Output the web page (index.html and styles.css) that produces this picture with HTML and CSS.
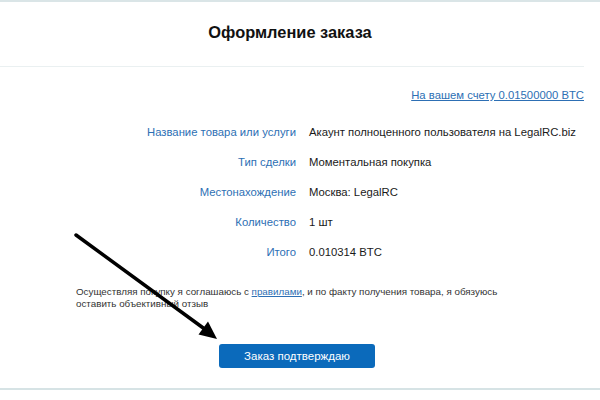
FILE: index.html
```html
<!DOCTYPE html>
<html lang="ru">
<head>
<meta charset="utf-8">
<title>Оформление заказа</title>
<link rel="stylesheet" href="styles.css">
</head>
<body>
<div class="page">
  <div class="panel">
    <div class="header"><h1 class="title">Оформление заказа</h1></div>
    <div class="balance"><a href="#" class="balance-link">На вашем счету 0.01500000 BTC</a></div>
    <div class="details">
      <div class="label">Название товара или услуги</div><div class="value">Акаунт полноценного пользователя на LegalRC.biz</div>
      <div class="label">Тип сделки</div><div class="value">Моментальная покупка</div>
      <div class="label">Местонахождение</div><div class="value">Москва: LegalRC</div>
      <div class="label">Количество</div><div class="value">1 шт</div>
      <div class="label">Итого</div><div class="value">0.010314 BTC</div>
    </div>
    <p class="terms">Осуществляя покупку я соглашаюсь с <a href="#" class="terms-link">правилами</a>, и по факту получения товара, я обязуюсь<br>оставить объективный отзыв</p>
    <div class="actions"><button class="confirm">Заказ подтверждаю</button></div>
  </div>
  <svg class="arrow" width="600" height="400" viewBox="0 0 600 400">
    <line x1="76" y1="235" x2="206" y2="330" stroke="#000" stroke-width="3.5" stroke-linecap="round"/>
    <polygon points="217,339 208,321.5 198.5,334.5" fill="#000"/>
  </svg>
</div>
</body>
</html>
```
FILE: styles.css
```css
html, body {
  margin: 0;
  padding: 0;
  background: #ffffff;
}
body {
  font-family: "Liberation Sans", Arial, sans-serif;
  color: #222;
}
.page {
  position: relative;
  width: 600px;
  height: 400px;
  overflow: hidden;
}
.panel {
  border-top: 2px solid #dae5e7;
  border-bottom: 2px solid #d6e3e5;
  padding-bottom: 20px;
}
.header {
  box-sizing: border-box;
  width: 584px;
  border-bottom: 1px solid #eaf0f1;
  padding: 20px 4px 24px 0;
  text-align: center;
}
.title {
  margin: 0;
  font-size: 16.4px;
  line-height: 20px;
  font-weight: bold;
  color: #111;
}
.balance {
  width: 584px;
  text-align: right;
  margin-top: 20px;
  font-size: 11.3px;
  line-height: 16px;
}
.balance-link {
  color: #2d6fb4;
  text-decoration: underline;
}
.details {
  display: grid;
  grid-template-columns: 296px 1fr;
  column-gap: 13px;
  grid-auto-rows: 30px;
  align-items: center;
  margin-top: 14px;
  font-size: 11.3px;
}
.label {
  text-align: right;
  color: #2d6fb4;
}
.value {
  color: #1a1a1a;
}
.terms {
  margin: 19px 0 0 76px;
  font-size: 9.8px;
  line-height: 12px;
  color: #333;
}
.terms-link {
  color: #2d6fb4;
  text-decoration: underline;
}
.actions {
  display: flex;
  padding-left: 219px;
  margin-top: 34px;
}
.confirm {
  width: 156px;
  height: 24px;
  border: 0;
  border-radius: 3px;
  background: #0b6abb;
  color: #fff;
  font-family: "Liberation Sans", Arial, sans-serif;
  font-size: 11.5px;
  padding: 0;
}
.arrow {
  position: absolute;
  left: 0;
  top: 0;
  pointer-events: none;
}
```
